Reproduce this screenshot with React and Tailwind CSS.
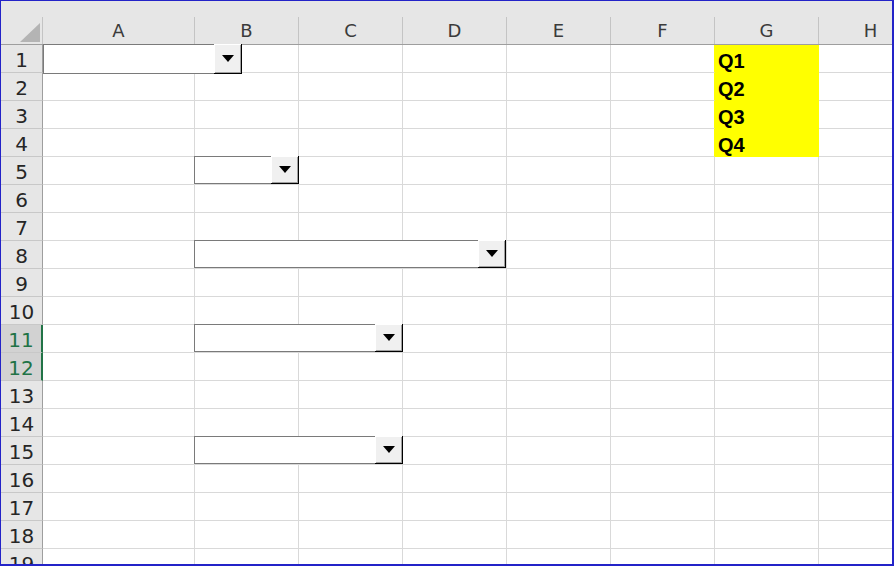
import React from "react";
import clsx from "clsx";

const COLS = [
  { key: "A", w: "w-[152px]" },
  { key: "B", w: "w-[104px]" },
  { key: "C", w: "w-[104px]" },
  { key: "D", w: "w-[104px]" },
  { key: "E", w: "w-[104px]" },
  { key: "F", w: "w-[104px]" },
  { key: "G", w: "w-[104px]" },
  { key: "H", w: "w-[104px]" },
];

const ROWS = Array.from({ length: 19 }, (_, i) => i + 1);

const DATA = { 1: "Q1", 2: "Q2", 3: "Q3", 4: "Q4" };

function Combo({ className }) {
  return (
    <div className={clsx("absolute flex", className)}>
      <div className="flex-1 border-y border-l border-[#7a7a7a] bg-white" />
      <div className="flex w-[28px] items-center justify-center border-r border-b border-black bg-[#f0f0f0] shadow-[inset_1px_1px_0_#ffffff,inset_-1px_-1px_0_#a0a0a0]">
        <svg width="12" height="7" viewBox="0 0 12 7">
          <path d="M0 0H12L6 7Z" fill="#000" />
        </svg>
      </div>
    </div>
  );
}

function HeaderRow() {
  return (
    <div className="flex h-[28px] shrink-0 border-b border-[#9e9e9e] bg-[#e6e6e6]">
      <div className="relative h-full w-[42px] shrink-0 border-r border-[#c4c4c4]">
        <svg className="absolute right-[2px] bottom-[2px]" width="20" height="19" viewBox="0 0 20 19">
          <path d="M20 0V19H0Z" fill="#b4b4b4" />
        </svg>
      </div>
      {COLS.map((c) => (
        <div
          key={c.key}
          className={clsx(
            "flex h-full shrink-0 justify-center border-r border-[#c4c4c4] pt-[5px] text-[18px] leading-none text-[#3b3b3b]",
            c.w
          )}
        >
          {c.key}
        </div>
      ))}
    </div>
  );
}

function Row({ n }) {
  const selected = n === 11 || n === 12;
  const filled = DATA[n] !== undefined;
  return (
    <div className="flex h-[28px] shrink-0">
      <div
        className={clsx(
          "flex h-full w-[42px] shrink-0 justify-center border-b border-[#c8c8c8] pt-[5px] text-[20px] leading-none",
          selected
            ? "border-r-2 border-r-[#217346] bg-[#d2d2d2] text-[#217346]"
            : "border-r border-r-[#9e9e9e] bg-[#e6e6e6] text-[#262626]"
        )}
      >
        {n}
      </div>
      {COLS.map((c) => {
        const isG = c.key === "G";
        const isF = c.key === "F";
        return (
          <div
            key={c.key}
            className={clsx(
              "flex h-full shrink-0 items-end border-r border-b",
              c.w,
              isG && filled
                ? "border-[#ffff00] bg-[#ffff00]"
                : "border-[#d9d9d9] bg-white",
              isF && filled && "border-r-[#ffff00]"
            )}
          >
            {isG && filled && (
              <span className="pl-[3px] pb-[1px] font-['Liberation_Sans',Arial,sans-serif] text-[20px] font-bold leading-[20px] text-black">
                {DATA[n]}
              </span>
            )}
          </div>
        );
      })}
    </div>
  );
}

export default function App() {
  return (
    <div className="relative flex h-[566px] w-[894px] flex-col overflow-hidden border-t border-l border-r-2 border-b-2 border-[#2323c8] bg-white font-['DejaVu_Sans',sans-serif]">
      <div className="h-[16px] shrink-0 bg-[#e6e6e6]" />
      <HeaderRow />
      {ROWS.map((n) => (
        <Row key={n} n={n} />
      ))}

      <Combo className="left-[42px] top-[43px] h-[30px] w-[199px]" />
      <Combo className="left-[193px] top-[155px] h-[28px] w-[105px]" />
      <Combo className="left-[193px] top-[239px] h-[28px] w-[312px]" />
      <Combo className="left-[193px] top-[323px] h-[28px] w-[209px]" />
      <Combo className="left-[193px] top-[435px] h-[28px] w-[209px]" />
    </div>
  );
}
